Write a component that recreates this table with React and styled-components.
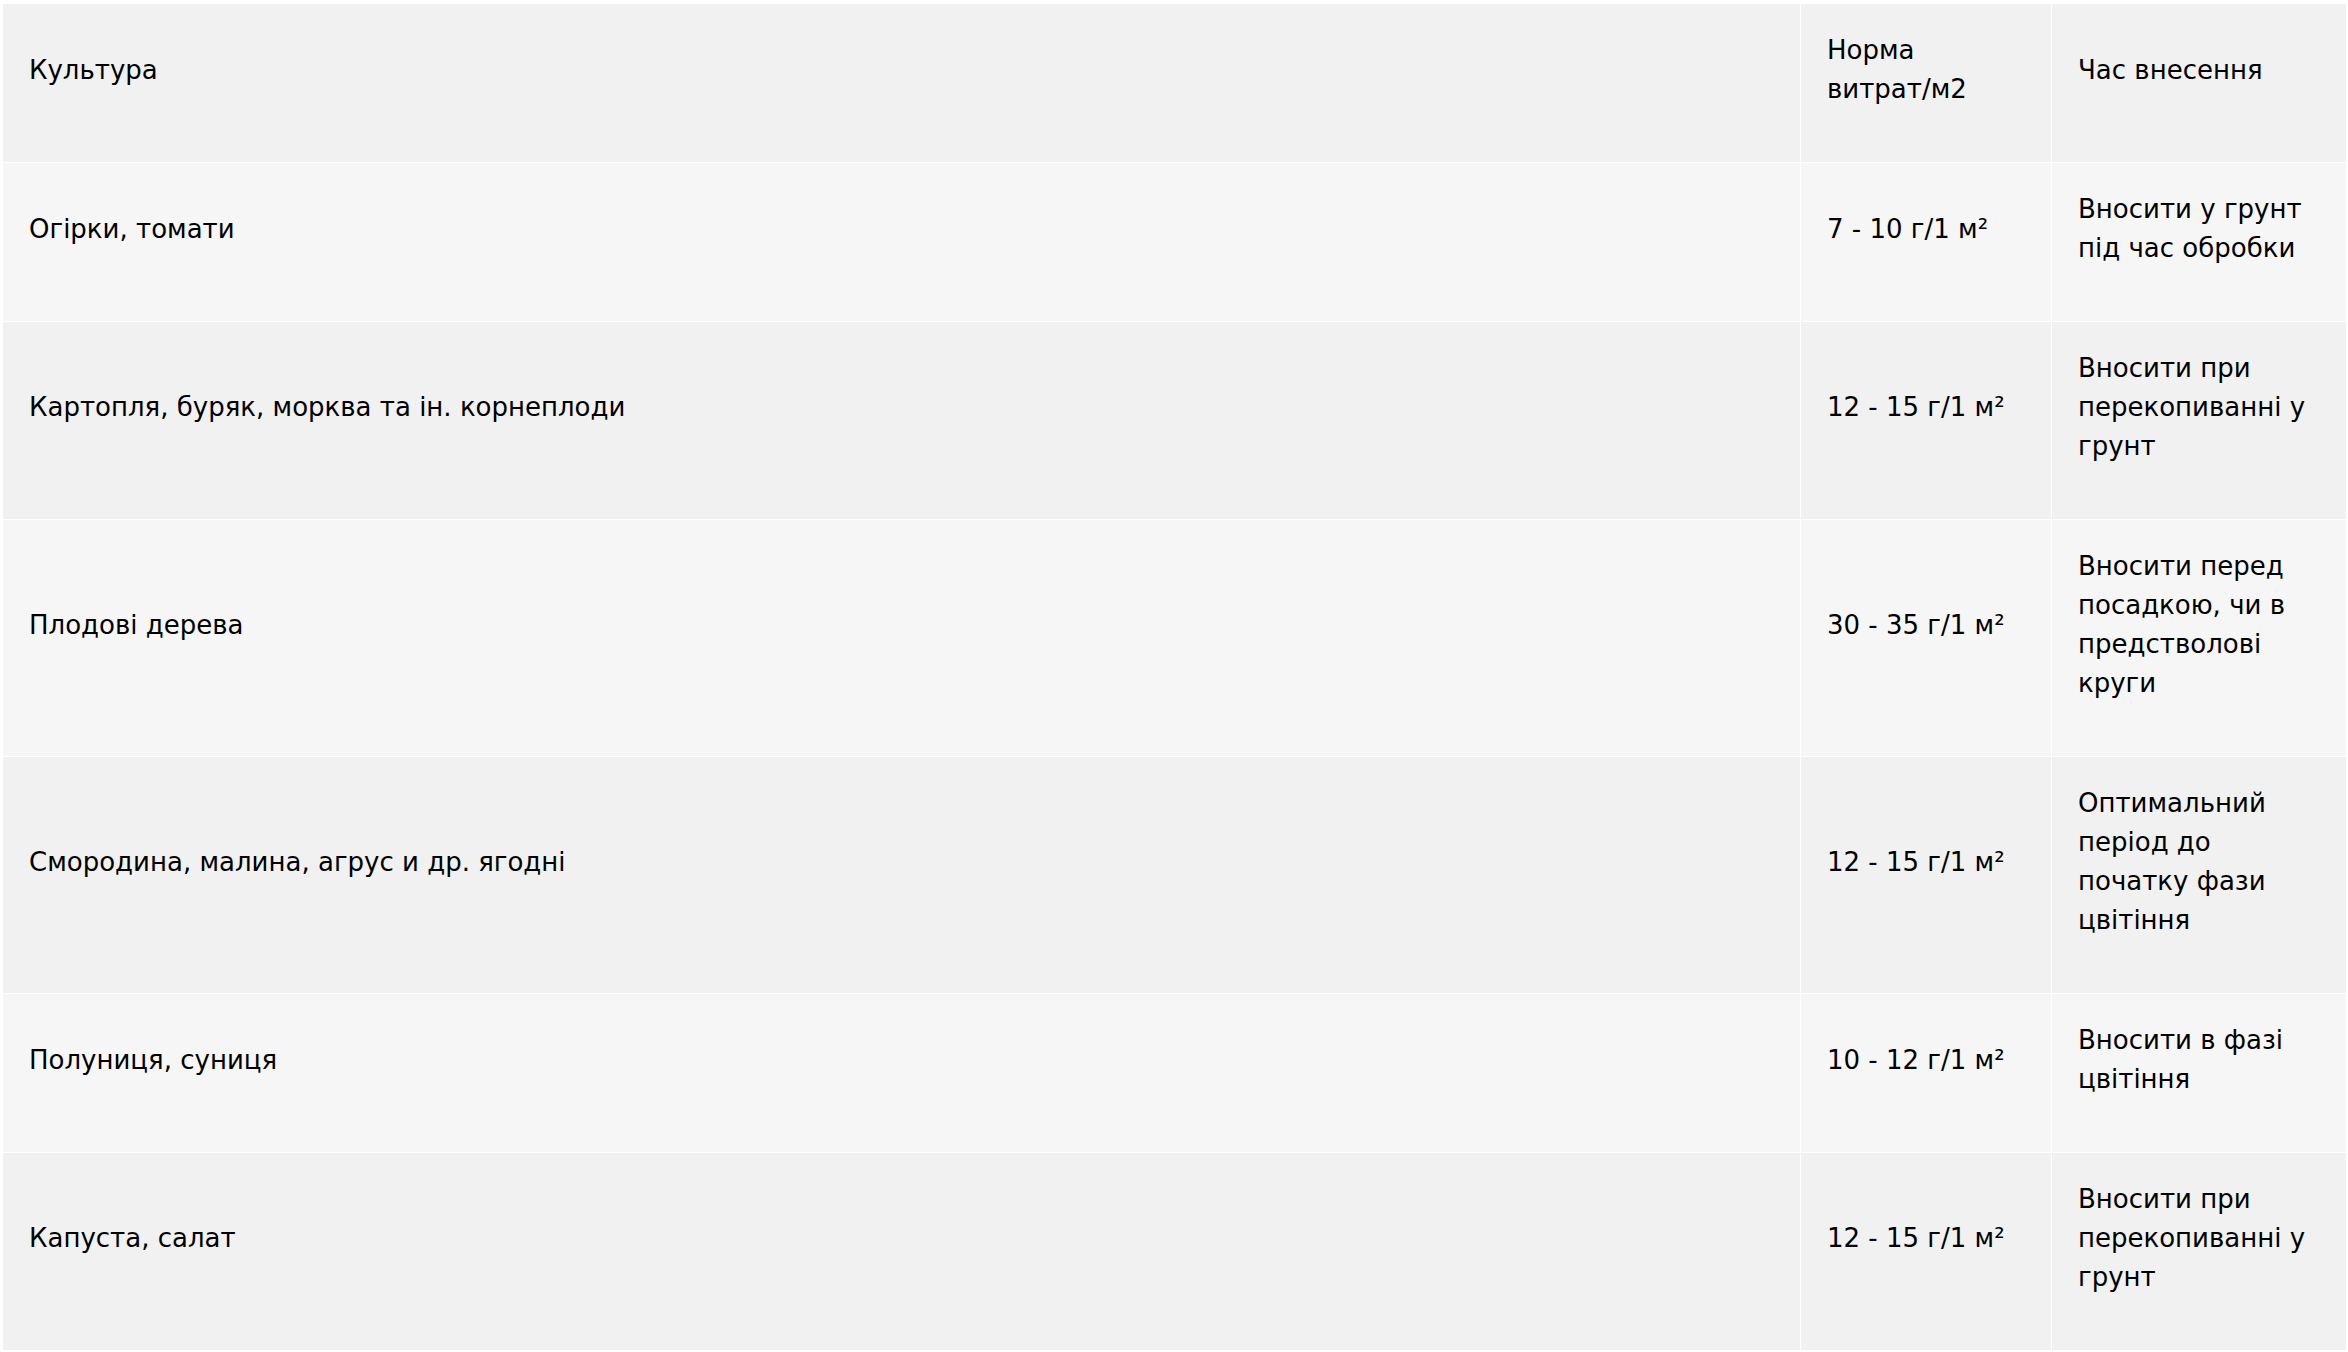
import React from 'react';
import styled, { createGlobalStyle } from 'styled-components';

const GlobalStyle = createGlobalStyle`
    html, body {
        margin: 0;
        padding: 0;
        background: #ffffff;
    }
    body {
        font-family: "DejaVu Sans", "Noto Sans", sans-serif;
        color: #000000;
    }
`;

const Wrapper = styled.div`
    padding: 3px 1px 3px 2px;
`;

const StyledTable = styled.table`
    width: 2345px;
    border-collapse: separate;
    border-spacing: 1px;
    table-layout: fixed;
    font-size: 26px;
    line-height: 39px;
`;

const Row = styled.tr`
    background-color: ${props => (props.$light ? '#f6f6f6' : '#f1f1f1')};
`;

const Cell = styled.td`
    padding: 27px 27px 53px 26px;
    vertical-align: middle;
    font-weight: 400;
    text-align: left;
`;

const HeadCell = styled(Cell).attrs({ as: 'th' })``;

const NoWrap = styled.span`
    white-space: nowrap;
`;

const rows = [
    ['Огірки, томати', '7 - 10 г/1 м²', 'Вносити у грунт під час обробки'],
    ['Картопля, буряк, морква та ін. корнеплоди', '12 - 15 г/1 м²', 'Вносити при перекопиванні у грунт'],
    ['Плодові дерева', '30 - 35 г/1 м²', 'Вносити перед посадкою, чи в предстволові круги'],
    ['Смородина, малина, агрус и др. ягодні', '12 - 15 г/1 м²', 'Оптимальний період до початку фази цвітіння'],
    ['Полуниця, суниця', '10 - 12 г/1 м²', 'Вносити в фазі цвітіння'],
    ['Капуста, салат', '12 - 15 г/1 м²', 'Вносити при перекопиванні у грунт'],
];

function App() {
    return (
        <>
            <GlobalStyle />
            <Wrapper>
                <StyledTable>
                    <colgroup>
                        <col style={{ width: 1797 }} />
                        <col style={{ width: 250 }} />
                        <col />
                    </colgroup>
                    <thead>
                        <Row>
                            <HeadCell>Культура</HeadCell>
                            <HeadCell>Норма <NoWrap>витрат/м2</NoWrap></HeadCell>
                            <HeadCell>Час внесення</HeadCell>
                        </Row>
                    </thead>
                    <tbody>
                        {rows.map((r, i) => (
                            <Row key={i} $light={i % 2 === 0}>
                                <Cell>{r[0]}</Cell>
                                <Cell><NoWrap>{r[1]}</NoWrap></Cell>
                                <Cell>{r[2]}</Cell>
                            </Row>
                        ))}
                    </tbody>
                </StyledTable>
            </Wrapper>
        </>
    )
}

export default App
